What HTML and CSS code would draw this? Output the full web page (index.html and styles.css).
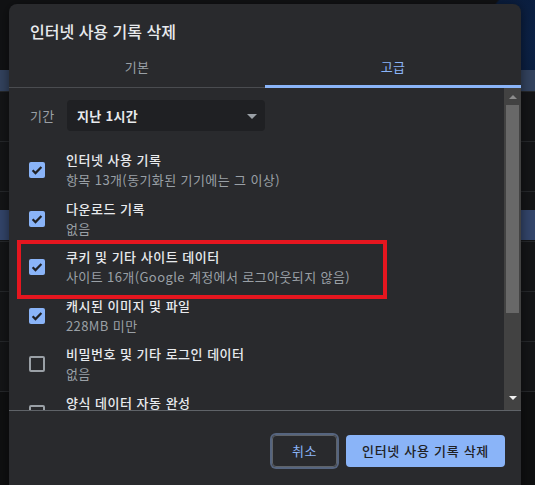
FILE: index.html
```html
<!DOCTYPE html>
<html lang="ko">
<head>
    <meta charset="UTF-8">
    <title>인터넷 사용 기록 삭제</title>
    <link rel="stylesheet" href="styles.css">
</head>
<body>
<div class="page">
    <div class="bg-top"></div>
    <div class="bg-row bg-blue"></div>
    <div class="bg-row"></div>
    <div class="bg-row"></div>
    <div class="bg-row bg-hl"></div>
    <div class="bg-row"></div>
    <div class="bg-row"></div>
    <div class="bg-row"></div>
</div>

<div class="dialog">
    <div class="title">인터넷 사용 기록 삭제</div>
    <div class="tabs">
        <div class="tab">기본</div>
        <div class="tab active">고급</div>
    </div>

    <div class="body">
        <div class="list">
            <div class="period">
                <span class="period-label">기간</span>
                <div class="select">
                    <span>지난 1시간</span>
                    <i class="caret"></i>
                </div>
            </div>

            <div class="row">
                <span class="check on"><svg viewBox="0 0 16 16"><path d="M3.6 8.2l2.9 2.9 5.9-6"/></svg></span>
                <div class="row-text">
                    <p>인터넷 사용 기록</p>
                    <em>항목 13개(동기화된 기기에는 그 이상)</em>
                </div>
            </div>
            <div class="row">
                <span class="check on"><svg viewBox="0 0 16 16"><path d="M3.6 8.2l2.9 2.9 5.9-6"/></svg></span>
                <div class="row-text">
                    <p>다운로드 기록</p>
                    <em>없음</em>
                </div>
            </div>
            <div class="row">
                <span class="check on"><svg viewBox="0 0 16 16"><path d="M3.6 8.2l2.9 2.9 5.9-6"/></svg></span>
                <div class="row-text">
                    <p>쿠키 및 기타 사이트 데이터</p>
                    <em>사이트 16개(Google 계정에서 로그아웃되지 않음)</em>
                </div>
            </div>
            <div class="row">
                <span class="check on"><svg viewBox="0 0 16 16"><path d="M3.6 8.2l2.9 2.9 5.9-6"/></svg></span>
                <div class="row-text">
                    <p>캐시된 이미지 및 파일</p>
                    <em>228MB 미만</em>
                </div>
            </div>
            <div class="row">
                <span class="check"></span>
                <div class="row-text">
                    <p>비밀번호 및 기타 로그인 데이터</p>
                    <em>없음</em>
                </div>
            </div>
            <div class="row">
                <span class="check"></span>
                <div class="row-text">
                    <p>양식 데이터 자동 완성</p>
                    <em>&nbsp;</em>
                </div>
            </div>
        </div>
        <div class="scrollbar">
            <i class="arrow up"></i>
            <div class="thumb"></div>
            <i class="arrow down"></i>
        </div>
    </div>

    <div class="footer">
        <span class="btn cancel">취소</span>
        <span class="btn primary">인터넷 사용 기록 삭제</span>
    </div>

    <div class="mark"></div>
</div>
</body>
</html>
```

FILE: styles.css
```css
* {
    padding: 0;
    margin: 0;
    box-sizing: border-box;
    font-style: normal;
}
body, html {
    height: 100%;
    overflow: hidden;
}
body {
    background: #0f1011;
    font-family: "Noto Sans CJK KR", "Noto Sans", sans-serif;
    position: relative;
}

/* page behind the dialog */
.page {
    height: 100%;
}
.bg-top {
    height: 70px;
    background: radial-gradient(circle at 545px 40px, #0c2247 0, #0a1d3d 60px, #111214 62px);
}
.bg-row {
    height: 50px;
    border-bottom: 1px solid #26282b;
    background: #141517;
}
.bg-blue {
    height: 22px;
    background: #33435e;
}
.bg-hl {
    background: linear-gradient(#141517 0, #141517 18px, #33456a 18px, #33456a 48px, #141517 48px);
}

/* dialog */
.dialog {
    position: absolute;
    left: 9px;
    top: 4px;
    width: 512px;
    height: 500px;
    background: #292a2d;
    border-radius: 8px;
    color: #e8eaed;
    box-shadow: 0 2px 12px rgba(0, 0, 0, .5);
}
.title {
    height: 44px;
    padding: 17px 0 0 21px;
    font-size: 16px;
    line-height: 20px;
    font-weight: 500;
}
.tabs {
    display: flex;
    height: 40px;
    border-bottom: 1px solid #4a4c50;
}
.tab {
    flex: 1;
    text-align: center;
    font-size: 13px;
    line-height: 37px;
    color: #9aa0a6;
    position: relative;
    letter-spacing: 0.4px;
}
.tab.active {
    color: #8ab4f8;
}
.tab.active:after {
    content: '';
    position: absolute;
    left: 0;
    right: 0;
    bottom: -1px;
    height: 3px;
    background: #8ab4f8;
}

.body {
    display: flex;
    height: 322px;
    overflow: hidden;
}
.list {
    flex: 1;
    padding: 12px 0 0 20px;
    overflow: hidden;
}
.period {
    display: flex;
    align-items: center;
    height: 31px;
    margin-bottom: 15px;
}
.period-label {
    width: 38px;
    padding-left: 1px;
    font-size: 13px;
    color: #9aa0a6;
    letter-spacing: 0.4px;
}
.select {
    width: 198px;
    height: 31px;
    background: #1f2023;
    border-radius: 4px;
    display: flex;
    align-items: center;
    justify-content: space-between;
    padding: 0 8px 0 10px;
    font-size: 13px;
    font-weight: 700;
    letter-spacing: 0.3px;
}
.caret {
    width: 0;
    height: 0;
    border-left: 5px solid transparent;
    border-right: 5px solid transparent;
    border-top: 5px solid #9aa0a6;
    margin-top: 1px;
}

.row {
    display: flex;
    align-items: center;
    height: 48.5px;
}
.check {
    width: 16px;
    height: 16px;
    border: 2px solid #9aa0a6;
    border-radius: 2px;
    margin-right: 21px;
    flex: none;
}
.check.on {
    border: none;
    background: #8ab4f8;
}
.check svg {
    display: block;
    width: 16px;
    height: 16px;
    fill: none;
    stroke: #202124;
    stroke-width: 2.2;
}
.row-text {
    white-space: nowrap;
    letter-spacing: 0.5px;
}
.row-text p {
    font-size: 13px;
    line-height: 20px;
    font-weight: 500;
    color: #e8eaed;
}
.row-text em {
    display: block;
    font-size: 13px;
    line-height: 20px;
    color: #9aa0a6;
    letter-spacing: 0.4px;
}

.scrollbar {
    width: 17px;
    background: #424242;
    padding: 0 2px;
    display: flex;
    flex-direction: column;
    align-items: center;
}
.thumb {
    width: 13px;
    height: 208px;
    background: #686868;
}
.arrow {
    width: 0;
    height: 0;
    border-left: 4px solid transparent;
    border-right: 4px solid transparent;
}
.arrow.up {
    border-bottom: 4px solid #8c8c8c;
    margin: 7px 0 6px;
}
.arrow.down {
    border-top: 4px solid #f1f1f1;
    margin-top: 83px;
}

.footer {
    border-top: 1px solid #5f6368;
    display: flex;
    justify-content: flex-end;
    align-items: flex-start;
    padding: 23px 16px 0 0;
}
.btn {
    height: 32px;
    line-height: 32px;
    border-radius: 4px;
    font-size: 13px;
    text-align: center;
    letter-spacing: 0.5px;
}
.cancel {
    width: 65px;
    margin: 1px 9px 0 0;
    line-height: 30px;
    color: #8ab4f8;
    border: 1px solid #5f6368;
    box-shadow: 0 0 0 2px #56657f;
}
.primary {
    width: 159px;
    background: #8ab4f8;
    color: #202124;
    font-weight: 500;
    margin-top: 1px;
    letter-spacing: 0.7px;
}

/* red highlight over the cookies row */
.mark {
    position: absolute;
    left: 8px;
    top: 236px;
    width: 370px;
    height: 59px;
    border: 4px solid #e5161f;
}
```
